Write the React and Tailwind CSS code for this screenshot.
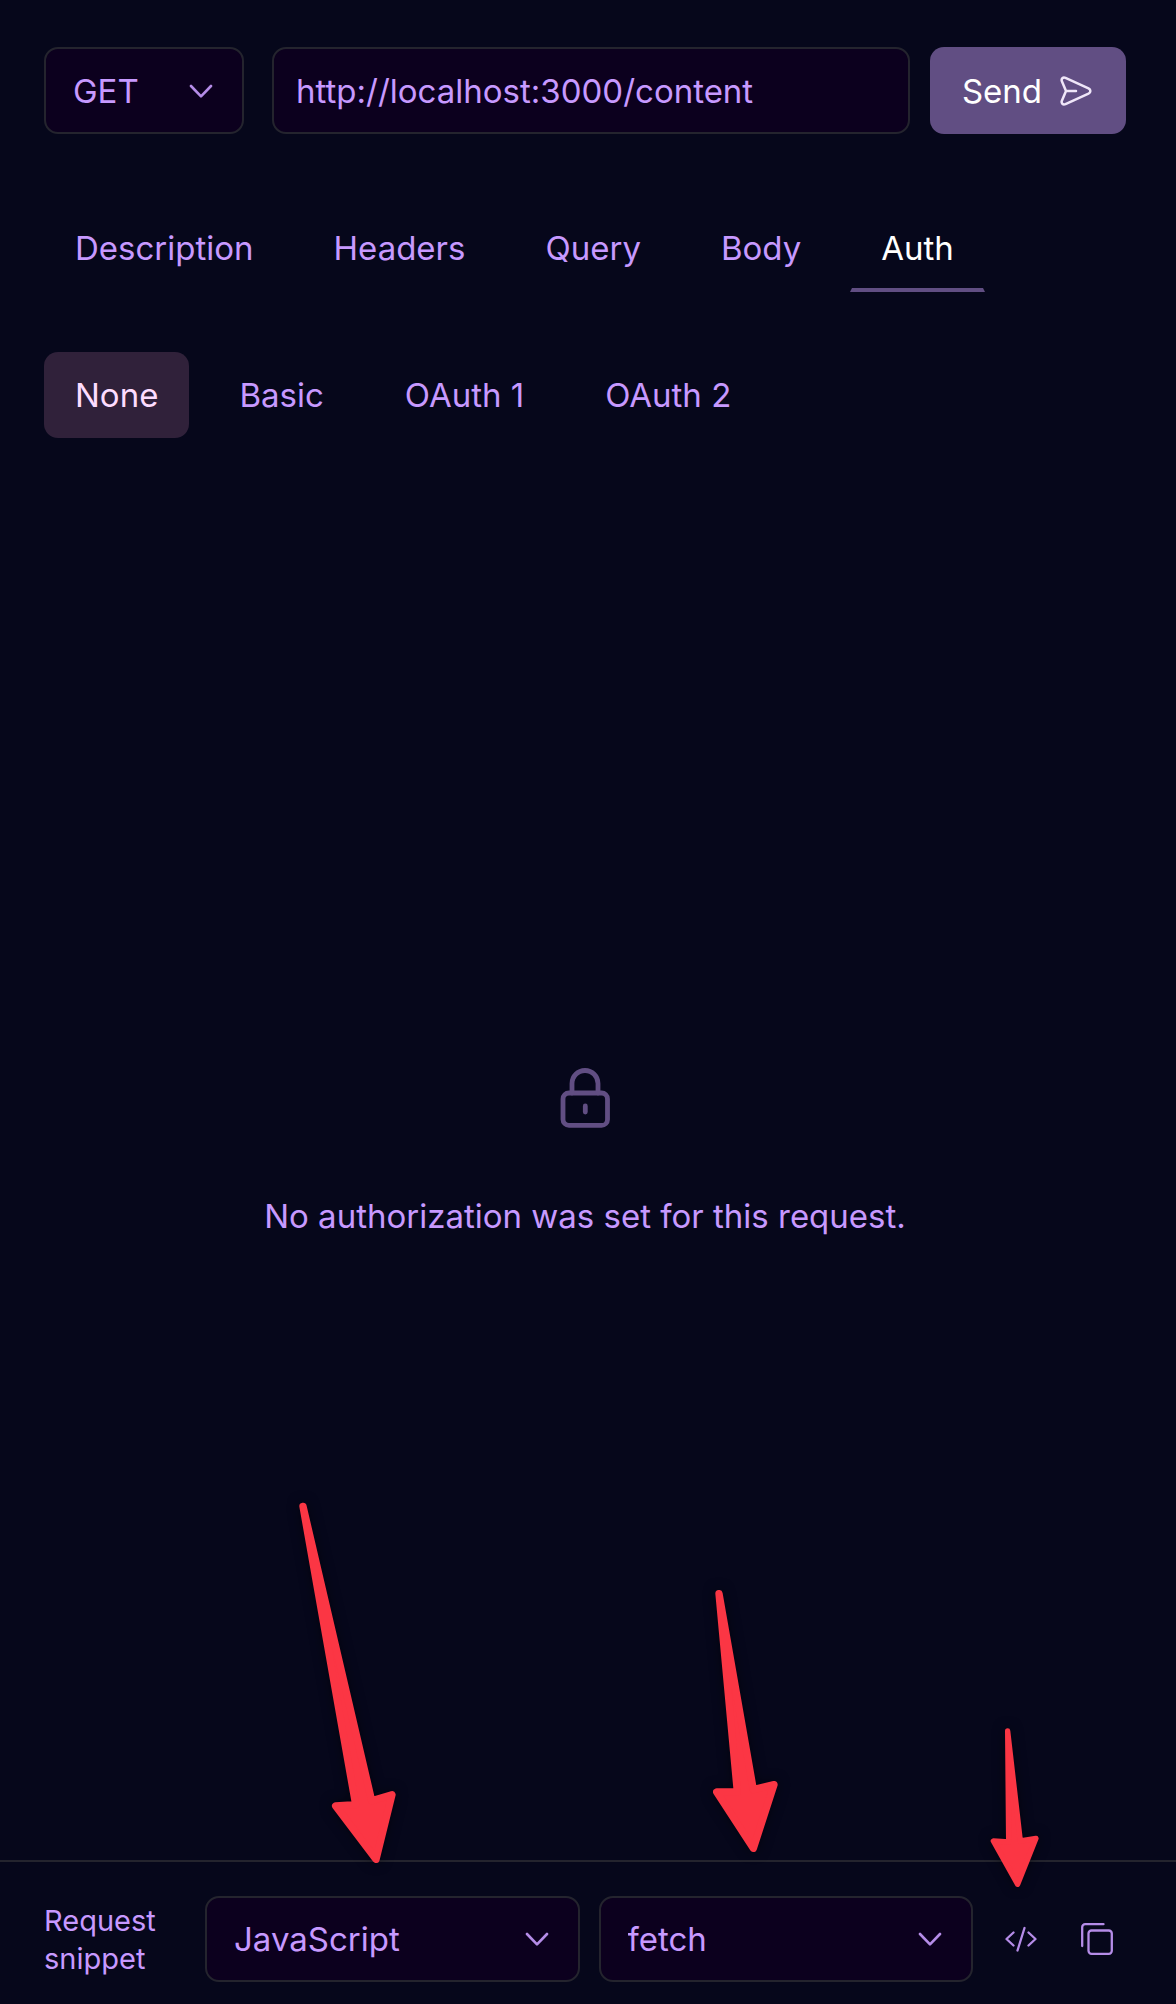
import { useState } from "react";

const TABS = ["Description", "Headers", "Query", "Body", "Auth"];
const AUTH_TYPES = ["None", "Basic", "OAuth 1", "OAuth 2"];

function Chevron() {
  return (
    <svg
      viewBox="0 0 24 14"
      className="pointer-events-none absolute top-1/2 right-[31px] h-[14px] w-6 -translate-y-1/2"
      fill="none"
      stroke="#b58ce8"
      strokeWidth="2.6"
      strokeLinecap="round"
      strokeLinejoin="round"
      aria-hidden="true"
    >
      <path d="M2 2 12 12.300 22 2" />
    </svg>
  );
}

function Select({ label, options, className, children }) {
  return (
    <div className={`relative ${className}`}>
      <select
        aria-label={label}
        className="block h-full w-full appearance-none rounded-[14px] border-2 border-[#24242e] bg-[#0c001e] pl-[27px] text-[33px] text-[#c799ff] outline-none"
      >
        {options.map((o) => (
          <option key={o}>{o}</option>
        ))}
      </select>
      <Chevron />
      {children}
    </div>
  );
}

function Arrow({ viewBox, d, strokeWidth, className }) {
  return (
    <svg
      viewBox={viewBox}
      className={`pointer-events-none absolute overflow-visible drop-shadow-[0_0_6px_rgba(0,0,0,0.5)] ${className}`}
      fill="#fb3644"
      stroke="#fb3644"
      strokeWidth={strokeWidth}
      strokeLinejoin="round"
      aria-hidden="true"
    >
      <path d={d} />
    </svg>
  );
}

export default function App() {
  const [tab, setTab] = useState("Auth");
  const [auth, setAuth] = useState("None");

  return (
    <div className="flex min-h-screen flex-col bg-[#06071b] font-['Inter',sans-serif] text-[33px] leading-10 text-[#c799ff]">
      <form
        className="flex items-center pt-[47px] pr-[50px] pl-11"
        onSubmit={(e) => e.preventDefault()}
      >
        <Select
          label="Method"
          options={["GET", "POST", "PUT", "DELETE"]}
          className="h-[87px] w-[200px]"
        />
        <input
          type="text"
          aria-label="Request URL"
          defaultValue="http://localhost:3000/content"
          className="ml-7 h-[87px] min-w-0 flex-1 rounded-[14px] border-2 border-[#24242e] bg-[#0c001e] px-[22px] outline-none"
        />
        <button
          type="submit"
          className="ml-5 flex h-[87px] items-center gap-[18px] rounded-[14px] bg-[#614e83] pr-[34px] pl-8 text-white"
        >
          Send
          <svg
            viewBox="0 0 32 30"
            className="h-[30px] w-8"
            fill="none"
            stroke="#efe6f8"
            strokeWidth="2.500"
            strokeLinecap="round"
            strokeLinejoin="round"
            aria-hidden="true"
          >
            <path d="M6 15 2 5.500C.8 2.700 3 .8 5.500 1.900L28.500 12.300C31 13.600 31 16.400 28.500 17.700L5.500 28.100C3 29.200.8 27.300 2 24.500L6 15H16" />
          </svg>
        </button>
      </form>

      <nav className="mt-[68px] flex gap-[18px] pr-[50px] pl-11" aria-label="Request sections">
        {TABS.map((t) => (
          <button
            key={t}
            type="button"
            onClick={() => setTab(t)}
            className={`h-[90px] border-x-2 border-b-4 border-transparent px-[29px] pt-1.5 ${
              t === tab ? "border-b-[#614e83] text-white" : ""
            }`}
          >
            {t}
          </button>
        ))}
      </nav>

      <div className="mt-[60px] flex gap-[19px] pr-[50px] pl-11">
        {AUTH_TYPES.map((a) => (
          <button
            key={a}
            type="button"
            onClick={() => setAuth(a)}
            className={`h-[86px] rounded-[14px] px-[31px] ${
              a === auth ? "bg-[#30213a] text-[#fddcff]" : ""
            }`}
          >
            {a}
          </button>
        ))}
      </div>

      <main className="flex flex-1 flex-col items-center justify-center gap-[68px] pt-1.5 pr-1.5">
        <svg
          viewBox="0 0 50 60"
          className="h-[60px] w-[50px]"
          fill="none"
          stroke="#614e83"
          strokeWidth="4.800"
          strokeLinecap="round"
          aria-hidden="true"
        >
          <rect x="3" y="25" width="44.500" height="32.400" rx="6" />
          <path d="M12 25V15.500a13 13 0 0 1 26 0V25M25.300 38v6" />
        </svg>
        <p>No authorization was set for this request.</p>
      </main>

      <footer className="flex items-center border-t-2 border-[#24242e] pt-[34px] pr-[50px] pb-[22px] pl-11">
        <p className="w-[161px] pt-0.5 text-[29px] leading-[38px]">
          Request
          <br />
          snippet
        </p>
        <div className="flex flex-1 gap-[19px]">
          <Select
            label="Language"
            options={["JavaScript", "Python", "Shell"]}
            className="h-[86px] flex-1"
          >
            <Arrow
              viewBox="0 0 420 1200"
              d="M69 79 275 962 336 944 288 1138 167 978 227 974Z"
              strokeWidth="22"
              className="bottom-[102px] left-[75px] h-[400px] w-[140px]"
            />
          </Select>
          <Select
            label="Library"
            options={["fetch", "axios", "jquery"]}
            className="h-[86px] flex-1"
          >
            <Arrow
              viewBox="0 0 330 900"
              d="M84 71 187 659 249 644 187 835 77 666 139 666Z"
              strokeWidth="22"
              className="bottom-[112px] left-[92px] h-[300px] w-[110px]"
            />
          </Select>
        </div>
        <button type="button" aria-label="Show code" className="relative ml-8 p-0">
          <svg
            viewBox="0 0 32 32"
            className="size-8"
            fill="none"
            stroke="#b58ce8"
            strokeWidth="2.300"
            strokeLinecap="round"
            strokeLinejoin="round"
            aria-hidden="true"
          >
            <path d="M8.500 9.500 1.500 16l7 6.500M23.500 9.500l7 6.500-7 6.500M19.500 5 12.500 27.500" />
          </svg>
          <Arrow
            viewBox="0 0 240 540"
            d="M113 63 151 393 198 385 143 523 70 393 116 396Z"
            strokeWidth="16"
            className="bottom-[65px] left-[-35px] h-[180px] w-[80px]"
          />
        </button>
        <button type="button" aria-label="Copy snippet" className="mr-[13px] ml-11 p-0">
          <svg
            viewBox="0 0 32 32"
            className="size-8"
            fill="none"
            stroke="#b58ce8"
            strokeWidth="2.300"
            strokeLinecap="round"
            strokeLinejoin="round"
            aria-hidden="true"
          >
            <rect x="7.500" y="7.500" width="23.300" height="23.300" rx="3" />
            <path d="M1.200 23V4.200a3 3 0 0 1 3-3h18.300" />
          </svg>
        </button>
      </footer>
    </div>
  );
}
